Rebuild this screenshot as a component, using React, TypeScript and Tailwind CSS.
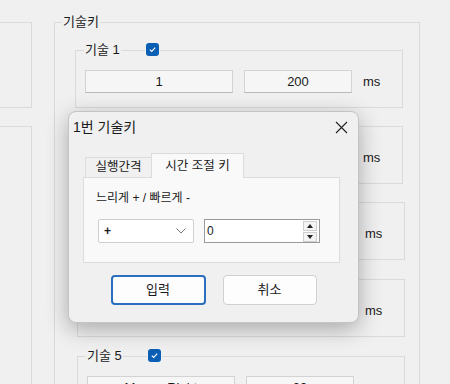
import React from "react";

const font = "font-['Liberation_Sans','Noto_Sans_CJK_KR',sans-serif]";

function Check() {
  return (
    <div className="w-[13px] h-[13px] rounded-[3px] bg-[#0a5fb4] flex items-center justify-center">
      <svg width="9" height="9" viewBox="0 0 9 9">
        <path d="M1.8 4.6 L3.7 6.4 L7.2 2.6" fill="none" stroke="#fff" strokeWidth="1.1" />
      </svg>
    </div>
  );
}

function Btn({ w, text }: { w: string; text: string }) {
  return (
    <div
      className={`${w} h-[23px] flex items-center justify-center bg-[#f6f6f6] border border-[#d3d3d3] border-b-[#b9b9b9] text-[13px] text-[#1a1a1a]`}
    >
      {text}
    </div>
  );
}

const groups = [
  { n: 1, a: "1", b: "200", shift: "" },
  { n: 2, a: "", b: "", shift: "" },
  { n: 3, a: "", b: "", shift: "ml-[2px]" },
  { n: 4, a: "", b: "", shift: "ml-[2px] mt-px" },
  { n: 5, a: "Mouse Right", b: "30", shift: "ml-[2px] mt-px" },
];

function SkillGroup({ n, a, b, shift }: { n: number; a: string; b: string; shift: string }) {
  return (
    <div className={`relative h-[58px] w-[328px] shrink-0 border border-[#dadada] ${shift}`}>
      <div className="absolute left-[8px] top-[-9px] h-[16px] px-[1px] bg-[#f0f0f0] text-[13px] leading-[16px] text-[#1a1a1a]">
        기술 {n}
      </div>
      <div className="absolute left-[69px] top-[-8px] bg-[#f0f0f0] px-[1px]">
        <Check />
      </div>
      <div className="flex items-center pl-[9px] pt-[19px]">
        <Btn w="w-[148px]" text={a} />
        <div className="ml-[11px]">
          <Btn w="w-[108px]" text={b} />
        </div>
        <span className="ml-[11px] text-[13px] text-[#1a1a1a]">ms</span>
      </div>
    </div>
  );
}

function Dialog() {
  return (
    <div className="absolute left-[68px] top-[111px] w-[291px] h-[212px] rounded-[8px] border border-[#c4c4c4] bg-[#f0f0f0] shadow-[0_6px_22px_rgba(0,0,0,0.3)] flex flex-col">
      <div className="h-[30px] flex items-center justify-between pl-[4px] pr-[10px]">
        <span className="text-[14px] text-[#1a1a1a]">1번 기술키</span>
        <svg width="13" height="13" viewBox="0 0 13 13">
          <path d="M1 1 L12 12 M12 1 L1 12" stroke="#222" strokeWidth="1.1" />
        </svg>
      </div>
      <div className="ml-[14px] mt-[11px] w-[257px]">
        <div className="flex items-end h-[24px] pl-[2px]">
          <div className="w-[66px] h-[20px] border-t border-l border-[#dcdcdc] flex items-center justify-center text-[12.5px] text-[#1a1a1a]">
            실행간격
          </div>
          <div className="relative z-10 -mb-px w-[93px] h-[25px] border-t border-l border-r border-[#dcdcdc] bg-[#f9f9f9] flex items-center justify-center text-[12.5px] text-[#1a1a1a]">
            시간 조절 키
          </div>
        </div>
        <div className="h-[86px] border border-[#dcdcdc] bg-[#f9f9f9]">
          <div className="pl-[12px] pt-[13px] text-[12px] leading-[14px] text-[#1a1a1a]">
            느리게 + / 빠르게 -
          </div>
          <div className="flex items-center pl-[14px] mt-[14px]">
            <div className="w-[96px] h-[24px] bg-white border border-[#cfcfcf] rounded-[2px] flex items-center justify-between pl-[5px] pr-[7px]">
              <span className="text-[12px] font-bold text-[#1a1a1a]">+</span>
              <svg width="10" height="6" viewBox="0 0 10 6">
                <path d="M0.5 0.5 L5 5 L9.5 0.5" fill="none" stroke="#777" strokeWidth="1" />
              </svg>
            </div>
            <div className="ml-[10px] w-[116px] h-[24px] bg-white border border-[#9a9a9a] flex items-center pl-[2px] pr-[2px]">
              <span className="flex-1 text-[12px] text-[#1a1a1a]">0</span>
              <div className="flex flex-col gap-[1px]">
                <div className="w-[14px] h-[10px] border border-[#cfcfcf] bg-[#f4f4f4] flex items-center justify-center">
                  <svg width="6" height="4" viewBox="0 0 6 4">
                    <path d="M0 4 L3 0 L6 4 Z" fill="#222" />
                  </svg>
                </div>
                <div className="w-[14px] h-[10px] border border-[#cfcfcf] bg-[#f4f4f4] flex items-center justify-center">
                  <svg width="6" height="4" viewBox="0 0 6 4">
                    <path d="M0 0 L6 0 L3 4 Z" fill="#222" />
                  </svg>
                </div>
              </div>
            </div>
          </div>
        </div>
      </div>
      <div className="mt-[12px] flex justify-center gap-[17px]">
        <div className="w-[95px] h-[30px] rounded-[4px] border-2 border-[#2a6fbf] bg-[#fdfdfd] flex items-center justify-center text-[13px] text-[#1a1a1a]">
          입력
        </div>
        <div className="w-[94px] h-[30px] rounded-[4px] border border-[#d0d0d0] bg-[#fdfdfd] flex items-center justify-center text-[13px] text-[#1a1a1a]">
          취소
        </div>
      </div>
    </div>
  );
}

export default function App() {
  return (
    <div className={`relative w-[450px] h-[384px] overflow-hidden bg-[#f0f0f0] flex ${font}`}>
      <div className="w-[32px] shrink-0 flex flex-col">
        <div className="mt-[22px] h-[86px] border-t border-r border-b border-[#dadada]" />
        <div className="mt-[18px] flex-1 border-t border-r border-[#dadada]" />
      </div>
      <div className="relative ml-[22px] mt-[22px] w-[366px] h-[400px] shrink-0 border-t border-l border-r border-[#dadada]">
        <div className="absolute left-[7px] top-[-9px] h-[16px] px-[1px] bg-[#f0f0f0] text-[13px] leading-[16px] text-[#1a1a1a]">
          기술키
        </div>
        <div className="flex flex-col gap-[18px] pl-[20px] pt-[27px]">
          {groups.map((g) => (
            <SkillGroup key={g.n} {...g} />
          ))}
        </div>
      </div>
      <Dialog />
    </div>
  );
}
